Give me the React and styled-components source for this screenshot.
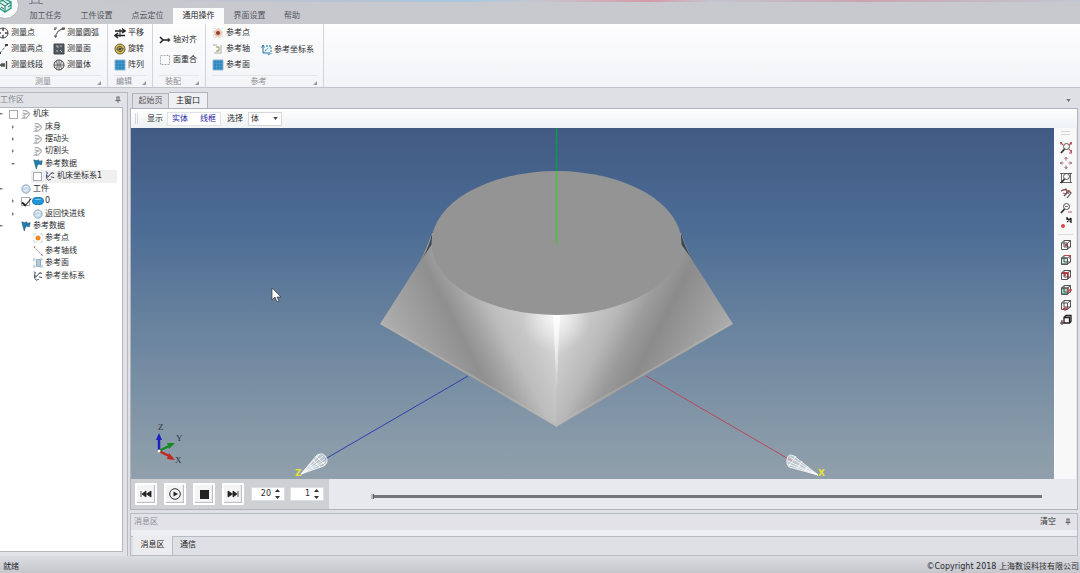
import React from 'react'
import styled, { createGlobalStyle } from 'styled-components'

const GlobalStyle = createGlobalStyle`
  * {
    box-sizing: border-box;
  }
  body {
    margin: 0;
    overflow: hidden;
    color: #2b2b2e;
    background: #dfe0e6;
    font: 8px/12px 'DejaVu Sans', 'Noto Sans CJK SC', sans-serif;
  }
  button, input, select {
    margin: 0;
    padding: 0;
    border: 0;
    color: inherit;
    background: none;
    font: inherit;
  }
`

// Shell
const Window = styled.div`
  display: flex;
  flex-direction: column;
  min-height: 100vh;
`

const TitleBar = styled.header`
  position: relative;
  height: 8px;
  background: linear-gradient(to right, #c9c9cf 0%, #c6c6ce 16%, #b9c3d2 30%, #a9c8e0 43%, #c7c5cf 50%, #d59aa8 60%, #c4c4cf 66%, #c9a5b1 80%, #c2c6d0 100%);
  &::after {
    content: '';
    position: absolute;
    inset: 2px 0 0;
    background: #c8c9cf;
  }
`

const AppLogo = styled.div`
  position: absolute;
  z-index: 2;
  left: -8px;
  top: -8px;
  width: 27px;
  height: 27px;
`

const QuickIcon = styled.svg`
  position: absolute;
  z-index: 1;
  left: 28px;
  top: 0;
`

const RibbonTabs = styled.nav`
  display: flex;
  height: 16px;
  padding-left: 20px;
  background: #c8c9cf;
`

const RibbonTab = styled.button`
  width: ${p => p.$width || 51}px;
  color: ${p => (p.$active ? '#222' : '#54555c')};
  background: ${p => (p.$active ? '#fbfbfd' : 'transparent')};
`

// Ribbon
const Ribbon = styled.section`
  display: flex;
  height: 64px;
  background: linear-gradient(#fdfdfe, #f3f4f7);
  border-bottom: 1px solid #c2c4cb;
`

const Group = styled.div`
  display: flex;
  flex-direction: column;
  width: ${p => p.$width}px;
  padding: 1px 0 0 ${p => p.$pad || 6}px;
  margin-left: ${p => (p.$clipped ? -4 : 0)}px;
  border-right: 1px solid #d3d4da;
`

const GroupBody = styled.div`
  display: flex;
  gap: ${p => p.$gap || 10}px;
  height: 50px;
`

const Column = styled.div`
  display: flex;
  flex-direction: column;
  justify-content: ${p => (p.$center ? 'center' : 'flex-start')};
  gap: ${p => p.$gap || 0}px;
`

const ToolButton = styled.button`
  display: flex;
  align-items: center;
  gap: 2px;
  height: 16px;
  white-space: nowrap;
  svg {
    flex: none;
  }
`

const GroupTitle = styled.div`
  display: flex;
  justify-content: center;
  position: relative;
  height: 12px;
  margin-right: 6px;
  padding-right: 12px;
  color: #8d8e96;
  border-top: 1px solid #e4e5ea;
  &::after {
    content: '';
    position: absolute;
    right: 0;
    bottom: 2px;
    border: 2px solid;
    border-color: transparent #9a9ba3 #9a9ba3 transparent;
  }
`

// Workspace
const Workspace = styled.div`
  display: flex;
  flex: 1;
  gap: 2px;
  padding: 4px 2px 0 0;
`

const Sidebar = styled.aside`
  display: flex;
  flex-direction: column;
  width: 128px;
  padding: 0 4px 4px 0;
  border: solid #b5b8c1;
  border-width: 1px 1px 0 0;
  background: #e1e2e8;
`

const PanelHeader = styled.div`
  display: flex;
  justify-content: space-between;
  align-items: center;
  height: 14px;
  padding-right: 2px;
  color: #85868f;
`

const TreePane = styled.div`
  flex: 1;
  background: #fff;
  border: solid #b5b8c1;
  border-width: 1px 1px 1px 0;
  overflow: hidden;
`

const Tree = styled.ul`
  display: grid;
  grid-auto-rows: 1fr;
  height: 174px;
  margin: 0 0 0 -5px;
  padding: 0;
  list-style: none;
`

const TreeRow = styled.li`
  display: flex;
  align-items: center;
  padding-left: ${p => p.$level * 12}px;
`

const TreeLabel = styled.label`
  display: flex;
  flex: 1;
  align-items: center;
  height: 100%;
  margin-right: 5px;
  white-space: nowrap;
  background: ${p => (p.$selected ? '#f0f0f1' : 'none')};
`

const Slot = styled.span`
  display: flex;
  flex: none;
  justify-content: center;
  align-items: center;
  width: ${p => p.$width || 12}px;
`

const Check = styled.input`
  appearance: none;
  position: relative;
  width: 9px;
  height: 9px;
  border: 1px solid #a9abb0;
  background: #fff;
  &:checked::after {
    content: '';
    position: absolute;
    left: 2px;
    top: -2px;
    width: 4px;
    height: 8px;
    border: solid #222;
    border-width: 0 1px 2px 0;
    transform: rotate(40deg);
  }
`

const Main = styled.main`
  display: flex;
  flex: 1;
  flex-direction: column;
  min-width: 0;
`

const DocTabs = styled.div`
  display: flex;
  align-items: flex-end;
  height: 16px;
  padding-left: 2px;
`

const DocTab = styled.button`
  width: ${p => (p.$active ? 39 : 37)}px;
  height: ${p => (p.$active ? 16 : 15)}px;
  color: ${p => (p.$active ? '#222' : '#555')};
  background: ${p => (p.$active ? '#eff0f4' : '#dfe0e6')};
  border: solid #b1b3bc;
  border-width: 1px 1px 0;
  & + & {
    border-left: 0;
  }
`

const TabMenu = styled.button`
  display: flex;
  margin: 0 7px 6px auto;
`

const Document = styled.section`
  display: flex;
  flex: 1;
  flex-direction: column;
  border: 1px solid #b1b3bc;
  background: #e7e9ee;
`

const ViewToolbar = styled.div`
  display: flex;
  align-items: center;
  height: 19px;
  padding-left: 4px;
  background: linear-gradient(#ffffff, #edf2f4);
`

const Grip = styled.span`
  width: 3px;
  height: 11px;
  margin-right: 9px;
  border: solid #d6d8de;
  border-width: 0 1px;
`

const ModeGroup = styled.div`
  display: flex;
  gap: 12px;
  height: 14px;
  margin: 0 6px 0 4px;
  padding: 0 4px;
  background: #fff;
  border: 1px solid #e1e3ea;
`

const ModeButton = styled.button`
  color: #2424a8;
`

const SelectWrap = styled.span`
  display: flex;
  align-items: center;
  position: relative;
  width: 34px;
  height: 14px;
  margin-left: 5px;
  background: #fff;
  border: 1px solid #d5d7de;
  select {
    width: 100%;
    padding-left: 2px;
    appearance: none;
  }
  svg {
    position: absolute;
    right: 3px;
    pointer-events: none;
  }
`

const Stage = styled.div`
  display: flex;
  flex: 1;
  padding-right: 1px;
`

const Viewport = styled.div`
  position: relative;
  flex: 1;
  background: linear-gradient(#415a83 0%, #4c6c95 28%, #6e87a0 62%, #899ba9 90%, #909fab 100%);
  svg {
    position: absolute;
    width: 100%;
    height: 100%;
  }
`

const ViewTools = styled.div`
  display: flex;
  flex-direction: column;
  align-items: center;
  width: 22px;
  background: #f8f8f9;
  border-left: 1px solid #fff;
`

const ViewGrip = styled.span`
  width: 9px;
  height: 4px;
  margin: 3px 0 5px;
  border: solid #d4d5d9;
  border-width: 1px 0;
`

const ViewTool = styled.button`
  display: flex;
  align-items: center;
  justify-content: center;
  width: 15px;
  height: 15px;
`

const Separator = styled.span`
  width: 15px;
  height: 1px;
  margin: 4px 0 2px;
  background: #dcdde1;
`

const Player = styled.div`
  display: flex;
  height: 30px;
`

const Transport = styled.div`
  display: flex;
  align-items: center;
  gap: 7px;
  width: 198px;
  padding-left: 4px;
  background: #cfd0d4;
`

const PlayerButton = styled.button`
  display: flex;
  flex: none;
  align-items: center;
  justify-content: center;
  width: 22px;
  height: 22px;
  border: 2px solid #fff;
  background: #f4f4f5;
  border-radius: 1px;
  box-shadow: inset -1px -1px 1px #b9bac0;
`

const Spins = styled.div`
  display: flex;
  gap: 5px;
`

const SpinBox = styled.label`
  display: flex;
  align-items: center;
  width: 34px;
  height: 14px;
  padding-right: 3px;
  background: #fff;
  border: 1px solid #dddfe4;
  input {
    width: 22px;
    padding-right: 3px;
    text-align: right;
    appearance: textfield;
  }
  input::-webkit-inner-spin-button {
    appearance: none;
  }
`

const Timeline = styled.div`
  display: flex;
  align-items: center;
  flex: 1;
  padding: 5px 35px 0 42px;
`

const Track = styled.input`
  appearance: none;
  width: 100%;
  height: 3px;
  background: #77757c;
  &::-webkit-slider-thumb {
    appearance: none;
    width: 3px;
    height: 5px;
    border-left: 2px solid #b8b9bf;
    background: #5c5b62;
  }
`

const Messages = styled.section`
  display: flex;
  flex-direction: column;
  height: 43px;
  margin-top: 3px;
  border: 1px solid #b9bbc4;
  background: #e9e9ee;
`

const MessagesHeader = styled.div`
  display: flex;
  align-items: center;
  height: 16px;
  padding: 0 6px 0 3px;
  color: #8b8c94;
  background: #e2e2e8;
  button {
    margin: 0 9px 0 auto;
    color: #333;
  }
`

const MessagesTabs = styled.div`
  display: flex;
  align-items: flex-end;
  flex: 1;
  padding-left: 2px;
  background: linear-gradient(#eceef1 6px, #b9bbc4 6px, #b9bbc4 7px, #dfe0e6 7px);
`

const MessagesTab = styled.button`
  width: ${p => (p.$active ? 40 : 30)}px;
  height: 19px;
  padding-bottom: 1px;
  color: #222;
  background: ${p => (p.$active ? '#ececf0' : 'none')};
  border-right: ${p => (p.$active ? '1px solid #b9bbc4' : 0)};
`

const StatusBar = styled.footer`
  display: flex;
  justify-content: space-between;
  align-items: flex-end;
  height: 17px;
  padding: 0 1px 0 3px;
  white-space: nowrap;
  background: linear-gradient(#dcdde3, #c6c7cd);
`

// Icons
const Icon = ({ size = 12, children }) => (
  <svg width={size} height={size} viewBox="0 0 12 12" fill="none" stroke="#444" aria-hidden="true">
    {children}
  </svg>
)

const Pin = () => (
  <svg width="6" height="8" viewBox="0 0 6 8" fill="none" stroke="#666" aria-hidden="true">
    <path d="M2 1v3M4 1v3M1.500 1h3M.5 4.500h5M3 5v2" />
  </svg>
)

const Caret = ({ color = '#444' }) => (
  <svg width="5" height="3" viewBox="0 0 6 4" aria-hidden="true">
    <path d="M0 0h6L3 4z" fill={color} />
  </svg>
)

const SpinArrows = () => (
  <svg width="7" height="12" viewBox="0 0 7 12" fill="#333" aria-hidden="true">
    <path d="M3.500 1L6 4H1zM3.500 11L1 8h5z" />
  </svg>
)

const icons = {
  point: <><circle cx="6" cy="6" r="5" /><path d="M6 1v3M6 8v3M1 6h3M8 6h3" strokeWidth="1.500" /></>,
  twoPoints: <><path d="M3 10l6-7" stroke="#777" strokeDasharray="3 1" /><path d="M1 10h3M8 2h3" strokeWidth="2" /></>,
  segment: <path d="M1 3v6M9.500 2v8M3 6h5M5 4v4M7 4v4" strokeWidth="1.300" />,
  arc: <><path d="M2.500 11C2.500 6 6 2 11 2" stroke="#777" strokeWidth="1.300" /><path d="M1 1h3M1 3l2-1" /><path d="M9 1h3v1H9zM1 9h3" /></>,
  face: <><path d="M1 1h10v10H1z" fill="#535b61" /><path d="M3 3h2v2M7 3h2M3 8h2M7 7l2 2" stroke="#b5c0c6" /></>,
  solid: <><circle cx="6" cy="6" r="5" fill="#e6e6e6" stroke="#444" /><path d="M1 6h10M6 1v10M3 2c2 3 2 5 0 8M9 2c-2 3-2 5 0 8" stroke="#666" /></>,
  move: <><path d="M1 4h10M8 1.500L11 4 8 6M11 8.500H2M4 6L1 8.500 4 11" strokeWidth="1.500" stroke="#222" /><path d="M6 2v8" stroke="#222" /></>,
  rotate: <><circle cx="6" cy="6" r="5" fill="#d8bd55" stroke="#6c6237" /><path d="M3 7c0-5 6-4 5-1M9 5c0 5-6 4-5 1" /><circle cx="6" cy="6" r="1" fill="#333" /></>,
  array: <><path d="M1 1h10v10H1z" fill="#2b86bd" stroke="#8fb7d2" /><path d="M2 4.500h8M2 7.500h8M4.500 2v8M7.500 2v8" stroke="#4b9fd0" strokeWidth=".7" /></>,
  align: <><path d="M1 3l3 3-3 3M4 6h4" stroke="#222" strokeWidth="1.500" /><circle cx="9.500" cy="6" r="1.300" fill="#222" /></>,
  overlap: <path d="M1.500 1.500h9v9h-9z" stroke="#aaa" strokeDasharray="2 1" />,
  refPoint: <><path d="M1.500 1.500h9v9h-9z" stroke="#d5d7da" strokeDasharray="2 2" /><circle cx="6" cy="6" r="4" fill="#efc7ae" stroke="none" /><circle cx="6" cy="6" r="2" fill="#884030" stroke="none" /></>,
  refAxis: <><path d="M1 2h4M2 10h8M9 2v7" stroke="#aaa" /><path d="M4 4h3v4H4" stroke="#9c8d50" /></>,
  coord: <><path d="M3 2v7M1.500 3.500L3 1l1.500 2.500M3 9h7" stroke="#286c9c" /><path d="M3 9l5-5M6 2h5v8M8 11l3-2" stroke="#489cc7" strokeWidth="1.300" strokeDasharray="2 1" /></>,
  part: <path d="M2 2h4l4 3v2L6 11H2l3-2M2 5l5 1-5 2" stroke="#adaeb3" strokeWidth="1.400" />,
  flag: <path d="M1 1l3 1 3-1v2l4-1-1 5-3-1-2 2-1 4-2-7z" fill="#1f80ae" stroke="#17516f" strokeWidth=".7" />,
  frame: <path d="M1 1l2 1-1 2v5l2 2 3-1M3 8l3-4 3-2M8 2l3 1M7 7l4 1M1 6h3" stroke="#3f4f65" strokeWidth="1.200" />,
  ball: <><circle cx="6" cy="6" r="5" fill="#c6d9e9" stroke="#8aa2b8" /><path d="M3 5c2-3 4-2 6-1M4 8c2 1 3 0 4-2" stroke="#fff" /></>,
  pill: <><rect x=".5" y="2.500" width="11" height="7" rx="3.500" fill="#2196d8" stroke="#1c80bb" /><path d="M3 4.500h6" stroke="#7cc7f0" /></>,
  dot: <><path d="M1 4V1h3M8 1h3v3M11 8v3H8M4 11H1V8" stroke="#bcd" /><circle cx="6" cy="6" r="3" fill="#f08a1d" stroke="none" /></>,
  axis: <><path d="M1 1l10 10" stroke="#b85b5b" strokeDasharray="2 1" /><path d="M1 1h2M10 11h2" stroke="#777" /></>,
  plane: <><path d="M4 2h5v8H4z" fill="#b4cbdc" stroke="#7f9db5" /><path d="M1 4V1h2M9 1h2v2M11 8v3H9M3 11H1V8" stroke="#89a8c1" /></>,
}

const Glass = () => <><circle cx="6.500" cy="4.500" r="3" stroke="#555" /><path d="M4.500 7L1 11" stroke="#333" strokeWidth="1.800" /></>
const Cube = () => <path d="M1.500 4h6v6.500h-6zM4 1.500h6.500V8H4zM1.500 4L4 1.500M7.500 4l3-2.500M7.500 10l3-2" stroke="#555" />

const viewIcons = [
  ['缩放全部', <><Glass /><path d="M0 2.500V.5h2M10 .5h1.500v2M12 11l-3-4M11.500 8v3H9M1 1l2 2M11 1L9 3" stroke="#b95560" strokeWidth="1.200" /></>],
  ['平移视图', <path d="M6 0v3.500M4.500 2L6 .5 7.500 2M6 8.500V12M4.500 10L6 11.500 7.500 10M0 6h3.500M2 4.500L.5 6 2 7.500M8.500 6H12M10 4.500L11.500 6 10 7.500" stroke="#9b6970" />],
  ['窗口缩放', <><path d="M1.500 1v10M10.500 1v10M0 1.500h12M0 10.500h12" strokeWidth=".8" /><Glass /></>],
  ['旋转视图', <><path d="M1 4l5-2 1 3-3 4M4 9l5-5 2 2-4 5" stroke="#555" strokeWidth="1.200" /><path d="M2 3h4l4 1-2 3M3 6l3 1" stroke="#b95560" /></>],
  ['动态缩放', <><Glass /><path d="M5 4.500h3M8 10h4" stroke="#a8616a" /></>],
  ['旋转中心', <><circle cx="3" cy="9" r="2" fill="#d14d4d" stroke="none" /><path d="M7 1l4 4M7 5l4-4M7 0v3M11 1v5" stroke="#222" strokeWidth="1.300" /></>],
]

const cubeIcons = [
  ['前视图', <><Cube /><circle cx="6" cy="6" r="1.300" fill="#b34246" stroke="none" /></>],
  ['后视图', <><path d="M1.500 4h6v6h-6z" fill="#c5eedf" /><Cube /><path d="M4 1.500h6M10 1v4" stroke="#bd4b50" /></>],
  ['左视图', <><Cube /><path d="M2 4h6v5M5 7V4" stroke="#b12f36" strokeWidth="1.500" /></>],
  ['右视图', <><path d="M1.500 4h6v6h-6z" fill="#91dfc2" /><Cube /><path d="M8 3v6M7 6h5" stroke="#bd4b50" strokeWidth="1.500" /></>],
  ['俯视图', <><Cube /><path d="M5 12V8M3 9.500h5" stroke="#bd4b50" strokeWidth="1.300" /></>],
  ['轴测图', <><path d="M4 3.500h5.500v5.500H4zM4 3.500l2-2h5v6l-1.500 1.500" stroke="#222" strokeWidth="1.300" /><path d="M2 6v5M0 9h4" stroke="#333" /><path d="M1 7l3 3" stroke="#b93a40" /></>],
]

const treeItems = [
  { level: 0, arrow: 'open', check: false, icon: 'part', text: '机床' },
  { level: 1, arrow: 'closed', icon: 'part', text: '床身' },
  { level: 1, arrow: 'closed', icon: 'part', text: '摆动头' },
  { level: 1, arrow: 'closed', icon: 'part', text: '切割头' },
  { level: 1, arrow: 'open', icon: 'flag', text: '参考数据' },
  { level: 2, check: false, icon: 'frame', text: '机床坐标系1', selected: true },
  { level: 0, arrow: 'open', icon: 'ball', text: '工件' },
  { level: 1, arrow: 'closed', check: true, icon: 'pill', text: '0' },
  { level: 1, arrow: 'closed', icon: 'ball', text: '返回快进线' },
  { level: 0, arrow: 'open', icon: 'flag', text: '参考数据' },
  { level: 1, icon: 'dot', text: '参考点' },
  { level: 1, icon: 'axis', text: '参考轴线' },
  { level: 1, icon: 'plane', text: '参考面' },
  { level: 1, icon: 'frame', text: '参考坐标系' },
]

const Tool = ({ icon, children }) => (
  <ToolButton>
    <Icon>{icons[icon]}</Icon>
    {children}
  </ToolButton>
)

const TreeItem = ({ level, arrow, check, icon, text, selected }) => (
  <TreeRow $level={level}>
    <Slot>
      {arrow && (
        <svg width="4" height="4" viewBox="0 0 4 4" fill="#777" aria-hidden="true">
          <path d={arrow === 'open' ? 'M0 1h4L2 3z' : 'M1 0l2 2-2 2z'} />
        </svg>
      )}
    </Slot>
    <TreeLabel $selected={selected}>
      <Slot>{check !== undefined && <Check type="checkbox" defaultChecked={check} />}</Slot>
      <Slot $width="14">
        <Icon size={icon === 'pill' ? 12 : 10}>{icons[icon]}</Icon>
      </Slot>
      {text}
    </TreeLabel>
  </TreeRow>
)

const Scene = () => (
  <svg viewBox="131 128 923 351" preserveAspectRatio="xMidYMid slice" role="img" aria-label="主窗口">
    <defs>
      <linearGradient id="left" gradientUnits="userSpaceOnUse" x1="380" y1="324" x2="522" y2="251">
        <stop offset="0" stopColor="#b0b0b0" />
        <stop offset=".2" stopColor="#a0a0a0" />
        <stop offset=".42" stopColor="#8f8f8f" />
        <stop offset=".52" stopColor="#a0a0a0" />
        <stop offset=".66" stopColor="#bcbcbc" />
        <stop offset=".85" stopColor="#cecece" />
        <stop offset="1" stopColor="#e2e2e2" />
      </linearGradient>
      <linearGradient id="right" gradientUnits="userSpaceOnUse" x1="733" y1="324" x2="591" y2="251">
        <stop offset="0" stopColor="#b0aeae" />
        <stop offset=".2" stopColor="#9c9c9c" />
        <stop offset=".4" stopColor="#8b8b8b" />
        <stop offset=".54" stopColor="#9c9c9c" />
        <stop offset=".68" stopColor="#b8b8b8" />
        <stop offset=".85" stopColor="#cacaca" />
        <stop offset="1" stopColor="#e2e2e2" />
      </linearGradient>
      <linearGradient id="ridge" x1="0" y1="0" x2="0" y2="1">
        <stop offset="0" stopColor="#fff" />
        <stop offset=".6" stopColor="#fff" stopOpacity=".6" />
        <stop offset="1" stopColor="#fff" stopOpacity="0" />
      </linearGradient>
      <radialGradient id="glow" gradientUnits="userSpaceOnUse" cx="556" cy="318" r="34">
        <stop offset="0" stopColor="#fff" stopOpacity=".7" />
        <stop offset="1" stopColor="#fff" stopOpacity="0" />
      </radialGradient>
    </defs>
    <path d="M468 376L320 462" stroke="#2f3fae" />
    <path d="M646 376L792 461" stroke="#b8485c" />
    <path d="M432 233q-5 15-13 30L380 324l177 103V243z" fill="url(#left)" />
    <path d="M681 233q5 15 13 30l39 61-177 103V243z" fill="url(#right)" />
    <path d="M432 233q-3 16-12 29l12-18zM681 233q4 16 13 29l-13-18z" fill="#3b4751" />
    <path d="M381 323l175 102 176-102" fill="none" stroke="#b9b8b6" strokeWidth="2" opacity=".5" />
    <circle cx="556" cy="318" r="34" fill="url(#glow)" />
    <path d="M553 315h7l-2 40-1 35h-1l-1-35z" fill="url(#ridge)" opacity=".8" />
    <ellipse cx="556.500" cy="243" rx="125" ry="72" fill="#949494" />
    <path d="M556.500 128v43" stroke="#0c9a48" strokeWidth="1.500" />
    <path d="M556.500 171v73" stroke="#4abf40" strokeWidth="1.500" />

    <g fill="#fff" fillOpacity=".4" stroke="#fff" strokeWidth=".8">
      <path d="M301 474l16-19q6-3 9 2t-2 9zM301 474l19-20M301 474l22-18M301 474l24-15M301 474l24-12M316 456l9 9M313 460l7 7M309 464l5 6" />
      <path d="M818 475l-24-19q-6-3-7 3t2 8zM818 475l-28-18M818 475l-30-14M818 475l-30-11M796 456l-7 10M802 461l-5 8M808 466l-3 5" />
    </g>
    <g fill="#e8e337" fontFamily="'DejaVu Sans', sans-serif" fontSize="9" fontWeight="700">
      <text x="295" y="476">Z</text>
      <text x="818" y="476">X</text>
    </g>

    <g strokeWidth="2.500">
      <path d="M159 451v-12" stroke="#1c1fc4" />
      <path d="M156 440l3-7 3 7z" fill="#1c1fc4" stroke="none" />
      <path d="M159 451l10-5" stroke="#168a24" />
      <path d="M167 443l8 0-6 6z" fill="#168a24" stroke="none" />
      <path d="M159 451l10 5" stroke="#c4271f" />
      <path d="M169 453l6 7-8-1z" fill="#c4271f" stroke="none" />
    </g>
    <circle cx="159" cy="451" r="1.500" fill="#fff" />
    <g fill="#2c3642" fontFamily="'Liberation Serif', serif" fontSize="9">
      <text x="158" y="430">Z</text>
      <text x="176" y="441">Y</text>
      <text x="175" y="463">X</text>
    </g>
    <path d="M272 288v12l3-3 2 5 2-1-2-4h4z" fill="#fff" stroke="#333" strokeWidth=".7" />
  </svg>
)

const App = () => (
  <>
    <GlobalStyle />
    <Window>
      <TitleBar>
        <AppLogo>
          <svg width="27" height="27" viewBox="0 0 27 27" aria-hidden="true">
            <circle cx="13.500" cy="13.500" r="13" fill="#f9fafa" stroke="#b4b6bb" />
            <path d="M13 7l6 3v6l-6 4-6-4v-6z" fill="#d7efe9" stroke="#35a28d" strokeWidth="1.500" />
            <path d="M8 11l5 3 6-4M13 14v6M10 8l6 4M16 15l3-2M9 15l3 2" fill="none" stroke="#237b6c" />
          </svg>
        </AppLogo>
        <QuickIcon width="16" height="6" viewBox="0 0 16 6" fill="none" stroke="#77798a" aria-hidden="true">
          <path d="M4 0v3h7V0M1 3.500h3M11 3.500h4" />
        </QuickIcon>
      </TitleBar>
      <RibbonTabs role="tablist">
        <RibbonTab role="tab">加工任务</RibbonTab>
        <RibbonTab role="tab">工件设置</RibbonTab>
        <RibbonTab role="tab">点云定位</RibbonTab>
        <RibbonTab role="tab" $active aria-selected="true">通用操作</RibbonTab>
        <RibbonTab role="tab">界面设置</RibbonTab>
        <RibbonTab role="tab" $width={34}>帮助</RibbonTab>
      </RibbonTabs>

      <Ribbon>
        <Group $width={112} $pad={1} $clipped>
          <GroupBody>
            <Column>
              <Tool icon="point">测量点</Tool>
              <Tool icon="twoPoints">测量两点</Tool>
              <Tool icon="segment">测量线段</Tool>
            </Column>
            <Column>
              <Tool icon="arc">测量圆弧</Tool>
              <Tool icon="face">测量面</Tool>
              <Tool icon="solid">测量体</Tool>
            </Column>
          </GroupBody>
          <GroupTitle>测量</GroupTitle>
        </Group>
        <Group $width={45}>
          <GroupBody>
            <Column>
              <Tool icon="move">平移</Tool>
              <Tool icon="rotate">旋转</Tool>
              <Tool icon="array">阵列</Tool>
            </Column>
          </GroupBody>
          <GroupTitle>编辑</GroupTitle>
        </Group>
        <Group $width={53}>
          <GroupBody>
            <Column $center $gap={4}>
              <Tool icon="align">轴对齐</Tool>
              <Tool icon="overlap">面重合</Tool>
            </Column>
          </GroupBody>
          <GroupTitle>装配</GroupTitle>
        </Group>
        <Group $width={118}>
          <GroupBody>
            <Column>
              <Tool icon="refPoint">参考点</Tool>
              <Tool icon="refAxis">参考轴</Tool>
              <Tool icon="array">参考面</Tool>
            </Column>
            <Column $center>
              <Tool icon="coord">参考坐标系</Tool>
            </Column>
          </GroupBody>
          <GroupTitle>参考</GroupTitle>
        </Group>
      </Ribbon>

      <Workspace>
        <Sidebar>
          <PanelHeader>
            工作区
            <Pin />
          </PanelHeader>
          <TreePane>
            <Tree>
              {treeItems.map((item, i) => (
                <TreeItem key={i} {...item} />
              ))}
            </Tree>
          </TreePane>
        </Sidebar>

        <Main>
          <DocTabs role="tablist">
            <DocTab role="tab">起始页</DocTab>
            <DocTab role="tab" $active aria-selected="true">主窗口</DocTab>
            <TabMenu aria-label="窗口列表">
              <Caret color="#777" />
            </TabMenu>
          </DocTabs>
          <Document>
            <ViewToolbar>
              <Grip />
              显示
              <ModeGroup>
                <ModeButton>实体</ModeButton>
                <ModeButton>线框</ModeButton>
              </ModeGroup>
              <label htmlFor="pick">选择</label>
              <SelectWrap>
                <select id="pick" defaultValue="体">
                  <option>体</option>
                </select>
                <Caret />
              </SelectWrap>
            </ViewToolbar>
            <Stage>
              <Viewport>
                <Scene />
              </Viewport>
              <ViewTools>
                <ViewGrip />
                {viewIcons.map(([name, art]) => (
                  <ViewTool key={name} aria-label={name}>
                    <Icon>{art}</Icon>
                  </ViewTool>
                ))}
                <Separator />
                {cubeIcons.map(([name, art]) => (
                  <ViewTool key={name} aria-label={name}>
                    <Icon>{art}</Icon>
                  </ViewTool>
                ))}
              </ViewTools>
            </Stage>
            <Player>
              <Transport>
                <PlayerButton aria-label="后退">
                  <Icon><path d="M1 3v6M6 3v6L2 6zM11 3v6L6.500 6z" fill="#222" stroke="#222" strokeWidth=".8" /></Icon>
                </PlayerButton>
                <PlayerButton aria-label="播放">
                  <Icon><circle cx="6" cy="6" r="5.300" stroke="#333" /><path d="M4.500 3.500v5L9 6z" fill="#222" stroke="none" /></Icon>
                </PlayerButton>
                <PlayerButton aria-label="停止">
                  <Icon><path d="M2 2h9v9H2z" fill="#222" stroke="none" /></Icon>
                </PlayerButton>
                <PlayerButton aria-label="前进">
                  <Icon><path d="M11 3v6M6 3v6l4-3zM1 3v6l4.500-3z" fill="#222" stroke="#222" strokeWidth=".8" /></Icon>
                </PlayerButton>
                <Spins>
                  <SpinBox>
                    <input type="number" aria-label="速度" defaultValue="20" />
                    <SpinArrows />
                  </SpinBox>
                  <SpinBox>
                    <input type="number" aria-label="步长" defaultValue="1" />
                    <SpinArrows />
                  </SpinBox>
                </Spins>
              </Transport>
              <Timeline>
                <Track type="range" aria-label="进度" defaultValue="0" />
              </Timeline>
            </Player>
          </Document>

          <Messages>
            <MessagesHeader>
              消息区
              <button>清空</button>
              <Pin />
            </MessagesHeader>
            <MessagesTabs role="tablist">
              <MessagesTab role="tab" $active aria-selected="true">消息区</MessagesTab>
              <MessagesTab role="tab">通信</MessagesTab>
            </MessagesTabs>
          </Messages>
        </Main>
      </Workspace>

      <StatusBar>
        <span>就绪</span>
        <span>©Copyright 2018 上海数设科技有限公司</span>
      </StatusBar>
    </Window>
  </>
)

export default App
